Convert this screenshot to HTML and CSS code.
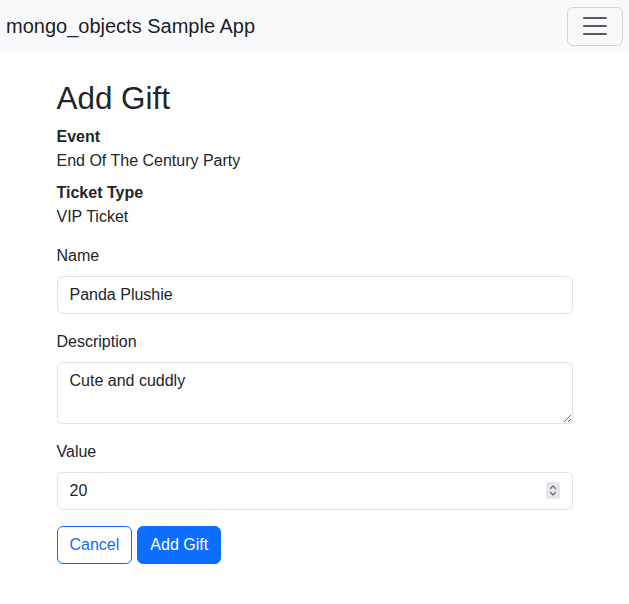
FILE: index.html
```html
<!DOCTYPE html>
<html lang="en">
<head>
<meta charset="utf-8">
<title>Add Gift</title>
<link rel="stylesheet" href="styles.css">
</head>
<body>
<nav class="navbar">
  <a class="brand" href="#">mongo_objects Sample App</a>
  <button class="toggler" type="button" aria-label="Toggle navigation">
    <svg class="toggler-icon" viewBox="0 0 30 30" width="30" height="30"><path d="M4 7h22M4 15h22M4 23h22" stroke="rgba(33,37,41,0.75)" stroke-width="2" stroke-linecap="round"/></svg>
  </button>
</nav>
<main class="container">
  <h1 class="title">Add Gift</h1>
  <dl class="details">
    <dt class="term">Event</dt>
    <dd class="desc">End Of The Century Party</dd>
    <dt class="term">Ticket Type</dt>
    <dd class="desc">VIP Ticket</dd>
  </dl>
  <form class="form">
    <div class="field">
      <label class="label" for="name">Name</label>
      <input class="control" id="name" type="text" value="Panda Plushie">
    </div>
    <div class="field">
      <label class="label" for="desc">Description</label>
      <textarea class="control textarea" id="desc" rows="2">Cute and cuddly</textarea>
    </div>
    <div class="field">
      <label class="label" for="value">Value</label>
      <div class="num-wrap">
        <input class="control num-input" id="value" type="number" value="20">
        <span class="spinner" aria-hidden="true">
          <svg viewBox="0 0 14 17" width="14" height="17"><path d="M4.5 6.5L7 4l2.5 2.5M4.5 10.5L7 13l2.5-2.5" fill="none" stroke="#6b6b70" stroke-width="1.2" stroke-linecap="round" stroke-linejoin="round"/></svg>
        </span>
      </div>
    </div>
    <div class="actions">
      <a class="btn btn-outline" href="#">Cancel</a>
      <button class="btn btn-primary" type="submit">Add Gift</button>
    </div>
  </form>
</main>
</body>
</html>
```
FILE: styles.css
```css
* { box-sizing: border-box; }
html, body { margin: 0; padding: 0; }
body {
  font-family: "Liberation Sans", Arial, sans-serif;
  font-size: 16px;
  line-height: 1.5;
  color: #212529;
  background: #fff;
}
.navbar {
  background: #f8f9fa;
  height: 53px;
  padding: 0 6px;
  display: flex;
  align-items: center;
  justify-content: space-between;
}
.brand {
  font-size: 20px;
  color: rgba(0,0,0,0.9);
  text-decoration: none;
  line-height: 1.5;
  margin-top: -1px;
}
.toggler {
  width: 56px;
  height: 39px;
  padding: 0;
  margin-top: -1px;
  background: transparent;
  border: 1px solid rgba(0,0,0,0.15);
  border-radius: 6px;
  display: flex;
  align-items: center;
  justify-content: center;
}
.toggler-icon { display: block; }
.container {
  max-width: 540px;
  margin: 0 auto;
  padding: 27px 12px 0;
}
.title {
  font-size: 31.4px;
  font-weight: 500;
  line-height: 1.2;
  margin: 0 0 7px;
}
.details { margin: 0 0 15px; }
.term { font-weight: 700; }
.desc { margin: 0 0 8px; }
.field { margin-bottom: 16px; }
.label {
  display: inline-block;
  margin-bottom: 8px;
}
.control {
  display: block;
  width: 100%;
  padding: 6px 12px;
  font-family: inherit;
  font-size: 16px;
  line-height: 1.5;
  color: #212529;
  background: #fff;
  border: 1px solid #dee2e6;
  border-radius: 6px;
  outline: none;
}
.textarea {
  height: 62px;
  resize: vertical;
}
.num-wrap { position: relative; }
.num-input { -moz-appearance: textfield; appearance: textfield; }
.num-input::-webkit-inner-spin-button,
.num-input::-webkit-outer-spin-button { -webkit-appearance: none; margin: 0; }
.spinner {
  position: absolute;
  right: 13px;
  top: 10px;
  width: 14px;
  height: 17px;
  background: #e6e6ea;
  border-radius: 3px;
  display: block;
}
.spinner svg { display: block; }
.actions {
  display: flex;
  gap: 5px;
}
.btn {
  display: inline-block;
  padding: 6px 12px;
  font-family: inherit;
  font-size: 16px;
  line-height: 1.5;
  border: 1px solid #0d6efd;
  border-radius: 6px;
  text-decoration: none;
  cursor: pointer;
}
.btn-outline { color: #0d6efd; background: #fff; }
.btn-primary { color: #fff; background: #0d6efd; }
```
